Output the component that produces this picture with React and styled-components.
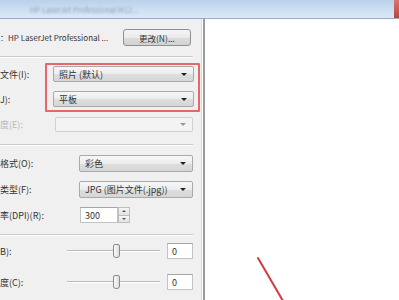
import React from "react";
import styled, { createGlobalStyle } from "styled-components";

const GlobalStyle = createGlobalStyle`
  html, body {
    margin: 0;
    padding: 0;
    background: #ffffff;
  }
  body {
    font-family: "Noto Sans CJK SC", "Noto Sans", "DejaVu Sans", sans-serif;
    font-size: 9px;
    color: #333;
  }
`;

const Window = styled.div`
  width: 399px;
  height: 300px;
  display: flex;
  flex-direction: column;
  overflow: hidden;
`;

const TitleBar = styled.div`
  height: 18px;
  flex-shrink: 0;
  display: flex;
  align-items: center;
  background: linear-gradient(180deg, #b9d1ea 0%, #cfe0f3 55%, #dbe8f6 100%);
  border-bottom: 1px solid #9aabbd;
  position: relative;
`;

const TitleText = styled.span`
  margin-left: 30px;
  font-size: 7.5px;
  color: #8aa0b7;
  filter: blur(0.8px);
  white-space: nowrap;
`;

const CloseCorner = styled.div`
  position: absolute;
  right: 0;
  top: 0;
  width: 5px;
  height: 18px;
  background: linear-gradient(180deg, #d9766f, #b9453d);
`;

const Body = styled.div`
  flex: 1;
  display: flex;
`;

const LeftPanel = styled.div`
  width: 202px;
  flex-shrink: 0;
  background: #f0f0f0;
  border-right: 1px solid #dcdcdc;
  padding-top: 10px;
  box-sizing: border-box;
`;

const RightPanel = styled.div`
  flex: 1;
  background: #ffffff;
  border-left: 2px solid #9c9c9c;
  margin-left: 1px;
  position: relative;
`;

const Row = styled.div`
  display: flex;
  align-items: center;
  height: ${({ h }) => h || 16}px;
  margin-top: ${({ mt }) => mt || 0}px;
`;

const Label = styled.div`
  width: ${({ w }) => w}px;
  flex-shrink: 0;
  white-space: nowrap;
  font-size: ${({ size }) => size || 9}px;
  color: ${({ disabled }) => (disabled ? "#b8b8b8" : "#333")};
`;

const Button = styled.div`
  width: 68px;
  height: 17px;
  box-sizing: border-box;
  margin-left: ${({ ml }) => ml}px;
  border: 1px solid #8f9090;
  border-radius: 3px;
  background: linear-gradient(180deg, #f4f4f4 0%, #ebebeb 50%, #dcdcdc 51%, #d2d2d2 100%);
  display: flex;
  align-items: center;
  justify-content: center;
  color: #333;
  font-size: 8.5px;
`;

const Separator = styled.div`
  height: 1px;
  width: 193px;
  background: #c9c9c9;
  border-bottom: 1px solid #ffffff;
  margin-top: ${({ mt }) => mt}px;
`;

const Select = styled.div`
  width: ${({ w }) => w}px;
  height: ${({ h }) => h || 16}px;
  box-sizing: border-box;
  margin-left: ${({ ml }) => ml || 0}px;
  border: 1px solid ${({ disabled }) => (disabled ? "#d0d0d0" : "#a9a9a9")};
  border-radius: 2px;
  background: ${({ disabled }) =>
    disabled
      ? "#f3f3f3"
      : "linear-gradient(180deg, #f7f7f7 0%, #ececec 50%, #dedede 51%, #d6d6d6 100%)"};
  display: flex;
  align-items: center;
  padding: 0 6px 0 5px;
  color: #333;
`;

const SelectText = styled.span`
  flex: 1;
  white-space: nowrap;
  overflow: hidden;
`;

const Arrow = styled.span`
  width: 0;
  height: 0;
  border-left: 3px solid transparent;
  border-right: 3px solid transparent;
  border-top: 3px solid ${({ disabled }) => (disabled ? "#9a9a9a" : "#222")};
`;

const HighlightGroup = styled.div`
  position: relative;
  margin-top: 8px;
`;

const Highlight = styled.div`
  position: absolute;
  left: 45px;
  top: -3px;
  width: 155px;
  height: 49px;
  box-sizing: border-box;
  border: 2px solid #e5676a;
  border-radius: 1px;
  pointer-events: none;
`;

const TextInput = styled.div`
  width: ${({ w }) => w}px;
  height: 16px;
  box-sizing: border-box;
  margin-left: ${({ ml }) => ml || 0}px;
  border: 1px solid #c3c3c3;
  border-top-color: #a5a5a5;
  background: #ffffff;
  display: flex;
  align-items: center;
  padding-left: 4px;
`;

const Spinner = styled.div`
  width: 12px;
  height: 16px;
  display: flex;
  flex-direction: column;
  box-sizing: border-box;
`;

const SpinButton = styled.div`
  flex: 1;
  border: 1px solid #bdbdbd;
  margin-top: ${({ down }) => (down ? "-1px" : "0")};
  background: linear-gradient(180deg, #f6f6f6, #e2e2e2);
  display: flex;
  align-items: center;
  justify-content: center;
  &::after {
    content: "";
    border-left: 2px solid transparent;
    border-right: 2px solid transparent;
    ${({ down }) =>
      down ? "border-top: 2px solid #555;" : "border-bottom: 2px solid #555;"}
  }
`;

const Slider = styled.div`
  position: relative;
  width: 93px;
  height: 16px;
  display: flex;
  align-items: center;
`;

const Track = styled.div`
  width: 100%;
  height: 1px;
  background: #b9b9b9;
  border-bottom: 1px solid #ffffff;
`;

const Thumb = styled.div`
  position: absolute;
  left: 46px;
  top: 1px;
  width: 5px;
  height: 12px;
  border: 1px solid #8a8a8a;
  border-radius: 2px 2px 3px 3px;
  background: linear-gradient(90deg, #fafafa, #dedede);
`;

const Annotation = styled.svg`
  position: absolute;
  left: 0;
  top: 0;
`;

function Dropdown({ w, ml, h, disabled, children }) {
  return (
    <Select w={w} ml={ml} h={h} disabled={disabled}>
      <SelectText>{children}</SelectText>
      <Arrow disabled={disabled} />
    </Select>
  );
}

function SliderRow({ label, mt }) {
  return (
    <Row mt={mt} h={16}>
      <Label w={67}>{label}</Label>
      <Slider>
        <Track />
        <Thumb />
      </Slider>
      <TextInput w={26} ml={7}>0</TextInput>
    </Row>
  );
}

export default function App() {
  return (
    <>
      <GlobalStyle />
      <Window>
        <TitleBar>
          <TitleText>HP LaserJet Professional M12...</TitleText>
          <CloseCorner />
        </TitleBar>
        <Body>
          <LeftPanel>
            <Row h={17}>
              <Label w={112} size={8}>：HP LaserJet Professional ...</Label>
              <Button ml={11}>更改(N)...</Button>
            </Row>
            <Separator mt={10} />

            <HighlightGroup>
              <Highlight />
              <Row>
                <Label w={53}>文件(I):</Label>
                <Dropdown w={141}>照片 (默认)</Dropdown>
              </Row>
              <Row mt={9}>
                <Label w={53}>J):</Label>
                <Dropdown w={141}>平板</Dropdown>
              </Row>
            </HighlightGroup>

            <Row mt={10} h={15}>
              <Label w={55} disabled>
                度(E):
              </Label>
              <Dropdown w={138} h={15} disabled />
            </Row>

            <Separator mt={12} />

            <Row mt={9} h={17}>
              <Label w={79}>格式(O):</Label>
              <Dropdown w={114} h={17}>彩色</Dropdown>
            </Row>
            <Row mt={9} h={17}>
              <Label w={79}>类型(F):</Label>
              <Dropdown w={114} h={17}>JPG (图片文件(.jpg))</Dropdown>
            </Row>
            <Row mt={9}>
              <Label w={80}>率(DPI)(R):</Label>
              <TextInput w={38}>300</TextInput>
              <Spinner>
                <SpinButton />
                <SpinButton down />
              </Spinner>
            </Row>

            <Separator mt={11} />

            <SliderRow label="B):" mt={7} />
            <SliderRow label="度(C):" mt={15} />
          </LeftPanel>
          <RightPanel>
            <Annotation width="192" height="282">
              <path
                d="M53 239 L78 282"
                stroke="#d33a3f"
                strokeWidth="2"
                strokeLinecap="round"
                fill="none"
              />
            </Annotation>
          </RightPanel>
        </Body>
      </Window>
    </>
  );
}
